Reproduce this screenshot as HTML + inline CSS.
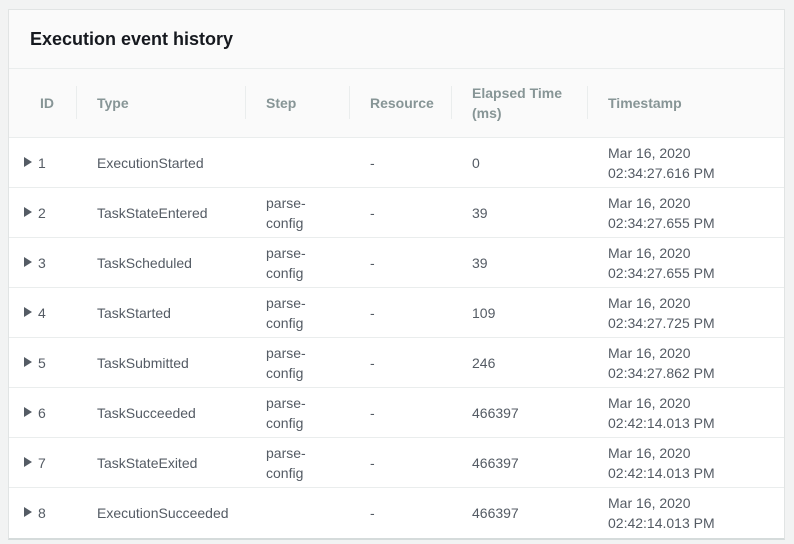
<!DOCTYPE html><html><head><style>
body{margin:0;width:794px;height:544px;background:#f2f3f3;font-family:"Liberation Sans",sans-serif;overflow:hidden}
.p{position:absolute;left:8px;top:9px;width:777px;height:531px;background:#fff;border:1px solid #e1e4e4;border-bottom:2px solid #d5dbdb;box-sizing:border-box}
.h{height:58px;background:#fafafa;border-bottom:1px solid #eaeded;font-weight:bold;font-size:18px;color:#16191f;padding-left:21px;line-height:58px}
.th{height:68px;background:#fafafa;border-bottom:1px solid #eaeded;position:relative;color:#879596;font-weight:bold;font-size:14px}
.th span{position:absolute;top:50%;transform:translateY(-50%);line-height:20px}
.d{position:absolute;top:17px;height:33px;width:1px;background:#eaeded}
.r{height:49px;border-bottom:1px solid #eaeded;position:relative;font-size:14px;color:#545b64}
.r span{position:absolute;top:50%;transform:translateY(-50%);line-height:20px}
.tri{position:absolute;left:15px;top:19px;width:0;height:0;border-left:8px solid #545b64;border-top:5px solid transparent;border-bottom:5px solid transparent}
</style></head><body><div class="p">
<div class="h">Execution event history</div>
<div class="th"><span style="left:31px">ID</span><i class="d" style="left:67px"></i><span style="left:88px">Type</span><i class="d" style="left:236px"></i><span style="left:257px">Step</span><i class="d" style="left:340px"></i><span style="left:361px">Resource</span><i class="d" style="left:442px"></i><span style="left:463px">Elapsed Time<br>(ms)</span><i class="d" style="left:578px"></i><span style="left:599px">Timestamp</span></div>
<div class="r"><i class="tri"></i><span style="left:29px">1</span><span style="left:88px">ExecutionStarted</span><span style="left:361px">-</span><span style="left:463px">0</span><span style="left:599px">Mar 16, 2020<br>02:34:27.616 PM</span></div>
<div class="r"><i class="tri"></i><span style="left:29px">2</span><span style="left:88px">TaskStateEntered</span><span style="left:257px">parse-<br>config</span><span style="left:361px">-</span><span style="left:463px">39</span><span style="left:599px">Mar 16, 2020<br>02:34:27.655 PM</span></div>
<div class="r"><i class="tri"></i><span style="left:29px">3</span><span style="left:88px">TaskScheduled</span><span style="left:257px">parse-<br>config</span><span style="left:361px">-</span><span style="left:463px">39</span><span style="left:599px">Mar 16, 2020<br>02:34:27.655 PM</span></div>
<div class="r"><i class="tri"></i><span style="left:29px">4</span><span style="left:88px">TaskStarted</span><span style="left:257px">parse-<br>config</span><span style="left:361px">-</span><span style="left:463px">109</span><span style="left:599px">Mar 16, 2020<br>02:34:27.725 PM</span></div>
<div class="r"><i class="tri"></i><span style="left:29px">5</span><span style="left:88px">TaskSubmitted</span><span style="left:257px">parse-<br>config</span><span style="left:361px">-</span><span style="left:463px">246</span><span style="left:599px">Mar 16, 2020<br>02:34:27.862 PM</span></div>
<div class="r"><i class="tri"></i><span style="left:29px">6</span><span style="left:88px">TaskSucceeded</span><span style="left:257px">parse-<br>config</span><span style="left:361px">-</span><span style="left:463px">466397</span><span style="left:599px">Mar 16, 2020<br>02:42:14.013 PM</span></div>
<div class="r"><i class="tri"></i><span style="left:29px">7</span><span style="left:88px">TaskStateExited</span><span style="left:257px">parse-<br>config</span><span style="left:361px">-</span><span style="left:463px">466397</span><span style="left:599px">Mar 16, 2020<br>02:42:14.013 PM</span></div>
<div class="r" style="border-bottom:none"><i class="tri"></i><span style="left:29px">8</span><span style="left:88px">ExecutionSucceeded</span><span style="left:361px">-</span><span style="left:463px">466397</span><span style="left:599px">Mar 16, 2020<br>02:42:14.013 PM</span></div>
</div></body></html>
